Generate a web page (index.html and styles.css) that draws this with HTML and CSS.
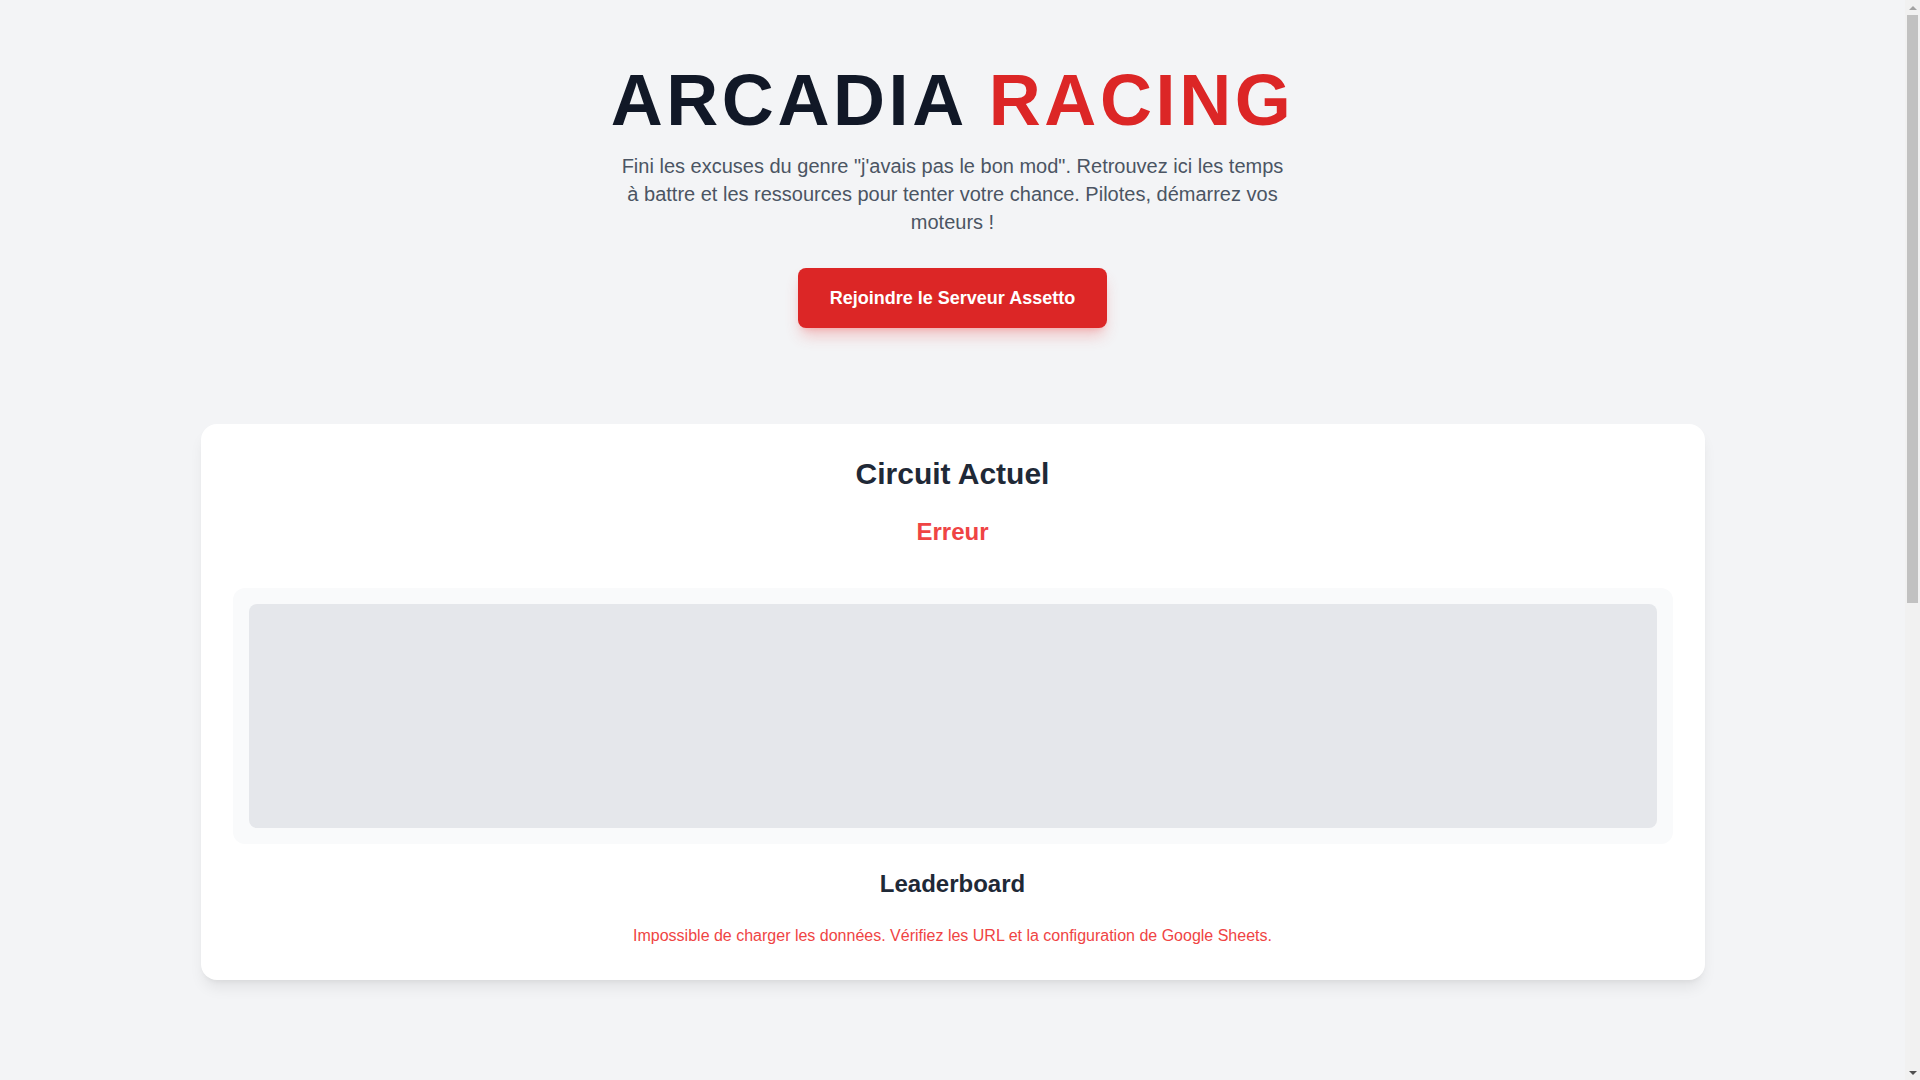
FILE: index.html
```html
<!DOCTYPE html>
<html lang="fr">
<head>
<meta charset="utf-8">
<title>Arcadia Racing</title>
<link rel="stylesheet" href="styles.css">
</head>
<body>
<div class="page">
  <header class="hero">
    <h1 class="title">ARCADIA <span class="accent">RACING</span></h1>
    <p class="intro">Fini les excuses du genre "j'avais pas le bon mod". Retrouvez ici les temps à battre et les ressources pour tenter votre chance. Pilotes, démarrez vos moteurs !</p>
    <a class="join-btn" href="#">Rejoindre le Serveur Assetto</a>
  </header>
  <main class="container">
    <section class="card">
      <h2 class="card-title">Circuit Actuel</h2>
      <p class="track-name">Erreur</p>
      <div class="track-panel">
        <div class="track-image"></div>
      </div>
      <h3 class="lb-title">Leaderboard</h3>
      <p class="lb-error">Impossible de charger les données. Vérifiez les URL et la configuration de Google Sheets.</p>
    </section>
  </main>
</div>
<div class="scrollbar" aria-hidden="true">
  <div class="sb-arrow sb-up"></div>
  <div class="sb-track"><div class="sb-thumb"></div></div>
  <div class="sb-arrow sb-down"></div>
</div>
</body>
</html>
```

FILE: styles.css
```css
* { box-sizing: border-box; }
html, body { margin: 0; padding: 0; }
html, body { height: 100%; overflow: hidden; }
body {
  background: #f3f4f6;
  font-family: "Liberation Sans", Arial, Helvetica, sans-serif;
  color: #1f2937;
}
.page { margin-right: 15px; }
.hero {
  display: flex;
  flex-direction: column;
  align-items: center;
  text-align: center;
  padding-top: 64px;
}
.title {
  margin: 0 0 16px;
  font-size: 72px;
  line-height: 1;
  font-weight: 700;
  letter-spacing: 0.05em;
  color: #111827;
}
.accent { color: #dc2626; }
.intro {
  margin: 0 0 32px;
  max-width: 672px;
  font-size: 20px;
  line-height: 28px;
  color: #4b5563;
}
.join-btn {
  display: inline-block;
  background: #dc2626;
  color: #ffffff;
  font-weight: 700;
  font-size: 18px;
  line-height: 28px;
  padding: 16px 32px;
  border-radius: 8px;
  text-decoration: none;
  box-shadow: 0 10px 15px -3px rgba(239, 68, 68, 0.3), 0 4px 6px -4px rgba(239, 68, 68, 0.3);
}
.container {
  max-width: 1536px;
  margin: 96px auto 0;
  padding: 0 16px;
}
.card {
  background: #ffffff;
  border-radius: 16px;
  padding: 32px;
  text-align: center;
  box-shadow: 0 10px 15px -3px rgba(0, 0, 0, 0.08), 0 4px 6px -4px rgba(0, 0, 0, 0.08);
}
.card-title {
  margin: 0 0 24px;
  font-size: 30px;
  line-height: 36px;
  font-weight: 700;
  color: #1f2937;
}
.track-name {
  margin: 0 0 40px;
  font-size: 24px;
  line-height: 32px;
  font-weight: 700;
  color: #ef4444;
}
.track-panel {
  background: #f9fafb;
  border-radius: 12px;
  padding: 16px;
}
.track-image {
  height: 224px;
  background: #e5e7eb;
  border-radius: 8px;
}
.lb-title {
  margin: 24px 0 24px;
  font-size: 24px;
  line-height: 32px;
  font-weight: 700;
  color: #1f2937;
}
.lb-error {
  margin: 0;
  font-size: 16px;
  line-height: 24px;
  color: #ef4444;
}
.scrollbar {
  position: fixed;
  top: 0;
  right: 0;
  width: 15px;
  height: 100vh;
  background: #f1f1f1;
  display: flex;
  flex-direction: column;
}
.sb-arrow {
  height: 15px;
  flex: none;
  display: flex;
  align-items: center;
  justify-content: center;
}
.sb-up::before,
.sb-down::before {
  content: "";
  width: 0;
  height: 0;
  border-left: 4px solid transparent;
  border-right: 4px solid transparent;
}
.sb-up::before { border-bottom: 4px solid #a3a3a3; }
.sb-down::before { border-top: 4px solid #505050; }
.sb-track {
  flex: 1;
  padding: 0 2px;
}
.sb-thumb {
  height: 588px;
  background: #c1c1c1;
  border-radius: 0;
}
```
